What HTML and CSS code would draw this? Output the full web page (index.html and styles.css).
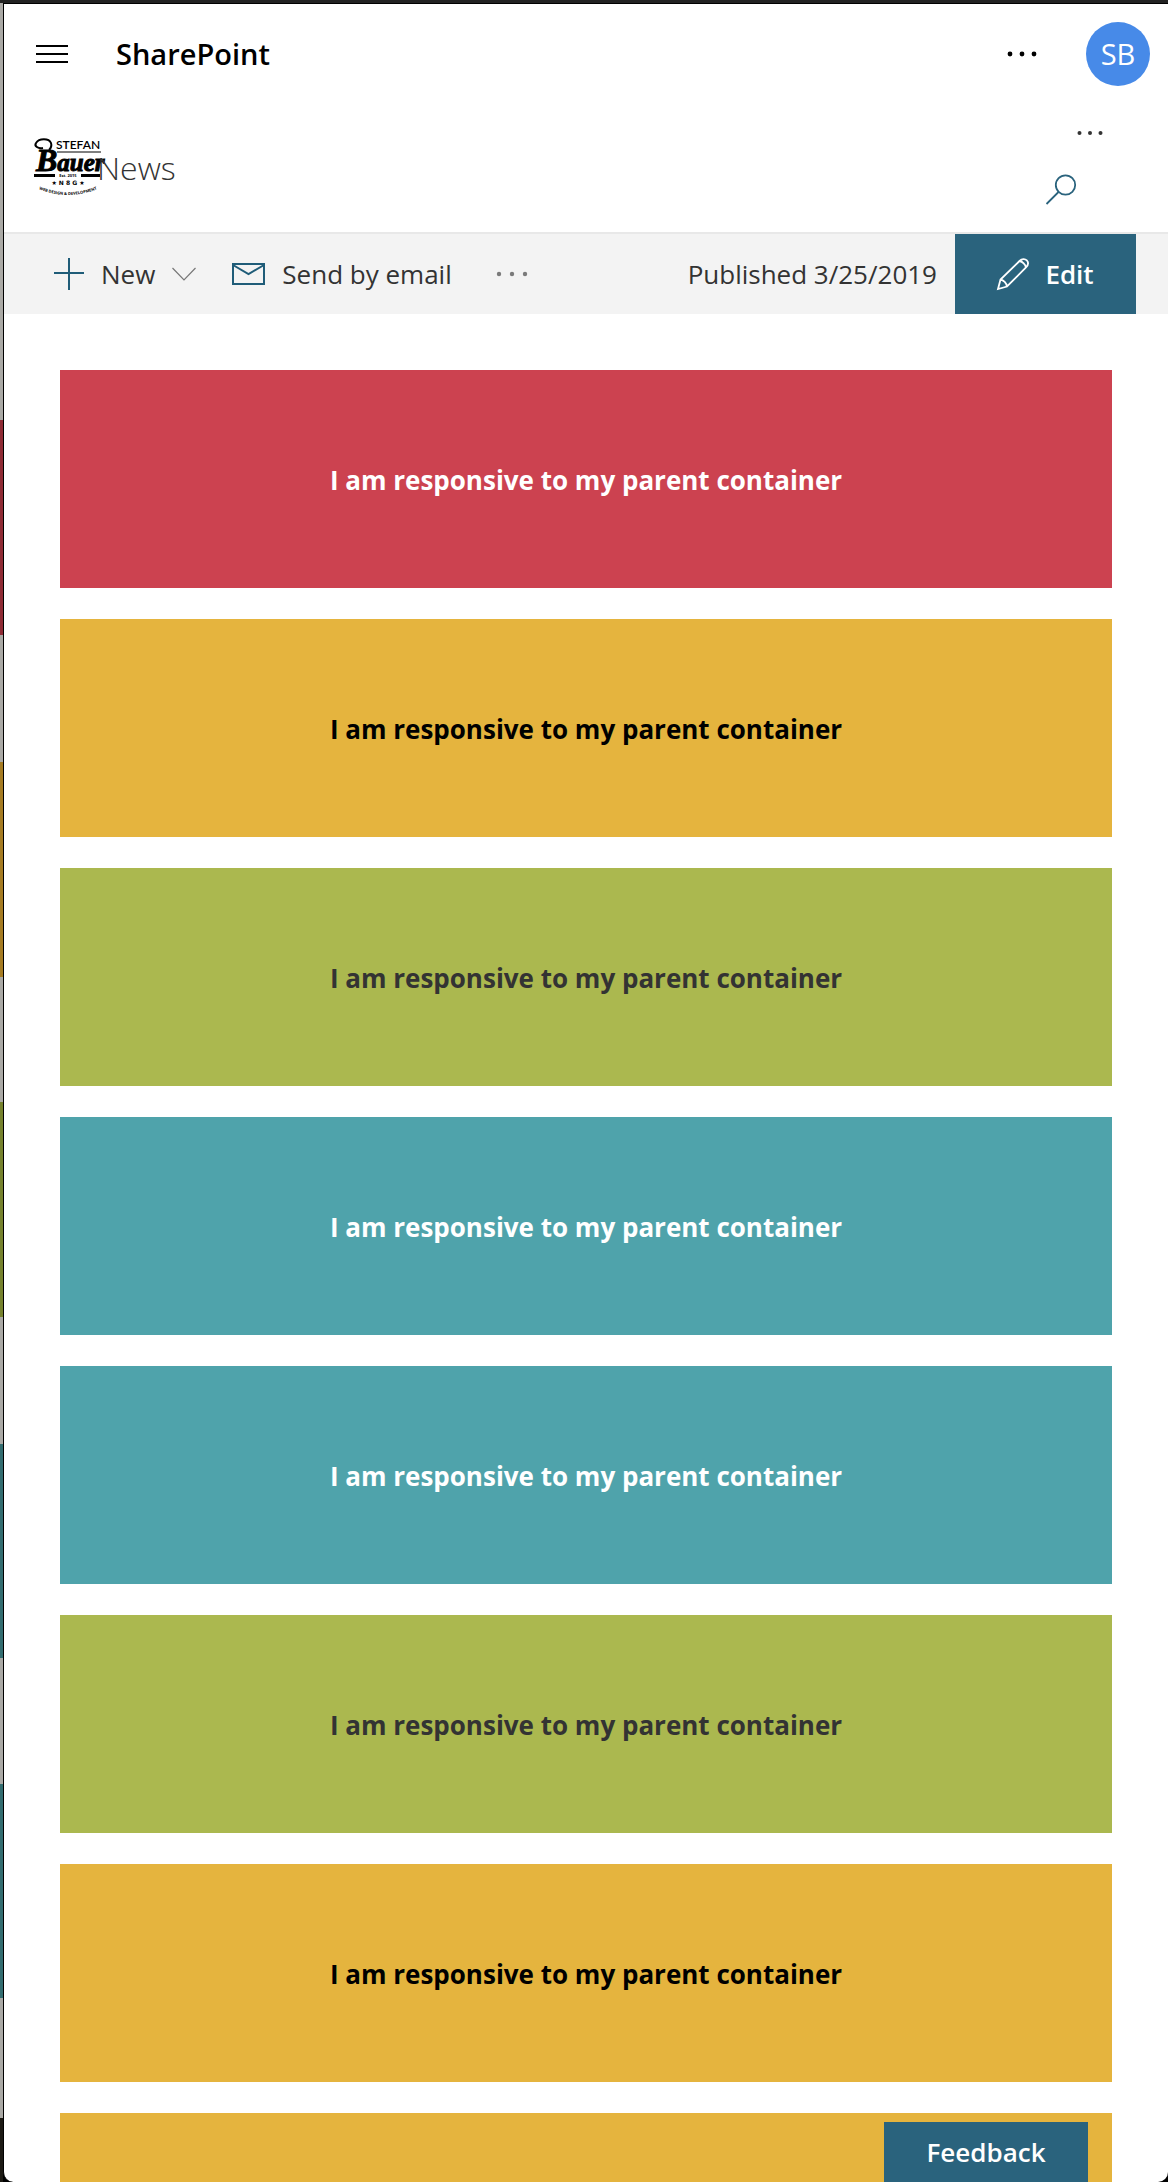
FILE: index.html
```html
<!DOCTYPE html>
<html lang="en">
<head>
<meta charset="utf-8">
<title>SharePoint - News</title>
<link rel="stylesheet" href="styles.css">
</head>
<body>
<div class="frame">
  <div class="window">
    <header class="suite-bar">
      <button class="icon-button" aria-label="Menu">
        <svg width="32" height="20" viewBox="0 0 32 20" stroke="#000" stroke-width="2"><path d="M0 2h32M0 10h32M0 18h32"/></svg>
      </button>
      <a class="suite-name" href="#">SharePoint</a>
      <button class="icon-button suite-more" aria-label="More">
        <svg width="30" height="6" viewBox="0 0 30 6" fill="#000"><circle cx="3" cy="3" r="2.4"/><circle cx="15" cy="3" r="2.4"/><circle cx="27" cy="3" r="2.4"/></svg>
      </button>
      <button class="avatar" aria-label="Account">SB</button>
    </header>

    <div class="site-header">
      <a class="site-title" href="#">
        <svg class="logo" width="68" height="58" viewBox="0 0 68 58" aria-label="Stefan Bauer">
          <text class="logo-first" x="22" y="10">STEFAN</text>
          <path d="M23 13h44" stroke="#000"/>
          <text class="logo-last" x="2" y="32">B<tspan class="logo-rest">auer</tspan></text>
          <path d="M9 9C4 10 0 7 2 4C5-1 15-1 17 4C18 7 17 9 15 11" fill="none" stroke="#000" stroke-width="2"/>
          <path d="M0 36.500h21M47 36.500h19" stroke="#000" stroke-width="3"/>
          <text class="logo-tiny" x="34" y="38">Est. 2015</text>
          <text class="logo-mid" x="34" y="46">★ N 8 G ★</text>
          <path id="arc" d="M0 48Q34 64 68 48" fill="none"/>
          <text class="logo-tiny"><textPath href="#arc" startOffset="50%">WEB DESIGN &amp; DEVELOPMENT</textPath></text>
        </svg>
        <span>News</span>
      </a>
      <div class="site-actions">
        <button class="icon-button" aria-label="More site actions">
          <svg width="26" height="6" viewBox="0 0 26 6" fill="#333"><circle cx="2.500" cy="3" r="2"/><circle cx="13" cy="3" r="2"/><circle cx="23.500" cy="3" r="2"/></svg>
        </button>
        <button class="icon-button search" aria-label="Search">
          <svg width="32" height="32" viewBox="0 0 32 32" fill="none" stroke="#2a637d" stroke-width="1.800"><circle cx="20.500" cy="11" r="9.700"/><path d="M13.500 18L1.500 30"/></svg>
        </button>
      </div>
    </div>

    <div class="command-bar">
      <button class="command">
        <svg width="30" height="32" viewBox="0 0 30 32" stroke="#1f5c78" stroke-width="2"><path d="M0 15h30M15 0v32"/></svg>
        <span>New</span>
        <svg class="chevron" width="24" height="14" viewBox="0 0 24 14" fill="none" stroke="#777" stroke-width="1.200"><path d="M.5 1L12 13L23.500 1"/></svg>
      </button>
      <button class="command">
        <svg width="33" height="22" viewBox="0 0 33 22" fill="none" stroke="#1f5c78" stroke-width="2"><path d="M1 1h31v20H1zM1 2l15.500 9L32 2"/></svg>
        <span>Send by email</span>
      </button>
      <button class="icon-button command-more" aria-label="More commands">
        <svg width="32" height="6" viewBox="0 0 32 6" fill="#7a7a7a"><circle cx="3" cy="3" r="2.200"/><circle cx="16" cy="3" r="2.200"/><circle cx="29" cy="3" r="2.200"/></svg>
      </button>
      <span class="status">Published 3/25/2019</span>
      <button class="edit">
        <svg width="32" height="32" viewBox="0 0 32 32" fill="none" stroke="#fff" stroke-width="1.800"><path d="M1 31L3.500 21.500L22.500 3C25 .5 28 .5 29.800 2.400C31.500 4.200 31.300 7 29 9.500L10 28.500zM3.500 21.500C6.500 22 9.500 25 10 28.500M22.500 3C25.500 3.500 28.500 6.500 29 9.500"/></svg>
        <span>Edit</span>
      </button>
    </div>

    <main class="cards">
      <div class="card red">I am responsive to my parent container</div>
      <div class="card yellow">I am responsive to my parent container</div>
      <div class="card green">I am responsive to my parent container</div>
      <div class="card teal">I am responsive to my parent container</div>
      <div class="card teal">I am responsive to my parent container</div>
      <div class="card green">I am responsive to my parent container</div>
      <div class="card yellow">I am responsive to my parent container</div>
      <div class="card yellow"></div>
    </main>
  </div>
</div>
<button class="feedback">Feedback</button>
</body>
</html>
```
FILE: styles.css
```css
* { box-sizing: border-box; }

body {
  margin: 0;
  font-family: "Open Sans", "Noto Sans", sans-serif;
  font-size: 26px;
  line-height: 36px;
  color: #333;
}

button {
  border: 0;
  padding: 0;
  background: none;
  color: inherit;
  font: inherit;
}

a { color: inherit; text-decoration: none; }
svg { display: block; flex: none; overflow: visible; }

/* The page behind shows as a thin strip along the left edge. */
.frame {
  height: 100vh;
  overflow: hidden;
  padding: 3px 0 0 3px;
  background:
    linear-gradient(#222, #222) top / 100% 3px no-repeat,
    linear-gradient(
      #aaa9a5 420px, #8f2b35 420px 635px,
      #aaa9a5 635px 762px, #a67c22 762px 977px,
      #aaa9a5 977px 1102px, #76822d 1102px 1317px,
      #aaa9a5 1317px 1444px, #336d70 1444px 1658px,
      #aaa9a5 1658px 1784px, #336d70 1784px 1998px,
      #aaa9a5 1998px 2118px, #1c1a14 2118px) left / 3px 100% no-repeat,
    #000;
}

.window {
  height: 100%;
  overflow: hidden;
  border: solid #000;
  border-width: 1px 0 0 1px;
  border-radius: 0 0 10px 10px;
  background: #fff;
}

.suite-bar {
  display: flex;
  align-items: center;
  height: 100px;
  padding: 0 18px 0 32px;
}

.suite-name {
  margin-left: 48px;
  font-size: 29px;
  font-weight: 600;
  color: #000;
}

.suite-more { margin-left: auto; }

.avatar {
  width: 64px;
  height: 64px;
  margin-left: 49px;
  border-radius: 50%;
  background: #478ae8;
  color: #fff;
  font-size: 29px;
  font-weight: 500;
}

.site-header {
  display: flex;
  justify-content: space-between;
  height: 130px;
  padding: 26px 65px 0 30px;
  border-bottom: 2px solid #e8e8e8;
}

.site-title {
  display: flex;
  height: 76px;
  align-items: center;
  font-size: 32px;
  font-weight: 300;
}

.site-title .logo { margin-right: -5px; }

.logo text { fill: #000; }
.logo .logo-first { font: 600 12px Lato, sans-serif; }
.logo .logo-last { font: italic bold 32px "Liberation Serif", serif; stroke: #000; }
.logo .logo-rest { font-size: 25px; }
.logo .logo-mid { font: bold 6px "DejaVu Sans", sans-serif; text-anchor: middle; }
.logo .logo-tiny { font: bold 4px "Open Sans", sans-serif; text-anchor: middle; }

.site-actions {
  display: flex;
  flex-direction: column;
  align-items: flex-end;
  gap: 38px;
}

.search { margin-right: 26px; }

.command-bar {
  display: flex;
  height: 80px;
  padding: 0 32px 0 50px;
  background: #f3f3f3;
}

.command {
  display: flex;
  align-items: center;
  gap: 17px;
  margin-right: 36px;
}

.command-more { margin-left: 8px; }

.status {
  margin: auto 18px auto auto;
}

.edit {
  display: flex;
  align-items: center;
  justify-content: center;
  gap: 16px;
  width: 181px;
  background: #2a637d;
  color: #fff;
  font-weight: 600;
}

.cards {
  display: grid;
  gap: 31px;
  padding: 56px;
}

.card {
  display: grid;
  place-items: center;
  height: 218px;
  padding-top: 2px;
  font-weight: 700;
}

.red { background: #cc4250; color: #fff; }
.yellow { background: #e5b43e; color: #000; }
.green { background: #abb84f; }
.teal { background: #4fa3ab; color: #fff; }

.feedback {
  position: fixed;
  right: 80px;
  bottom: 0;
  width: 204px;
  height: 60px;
  background: #2a637d;
  color: #fff;
  font-weight: 600;
}
```
